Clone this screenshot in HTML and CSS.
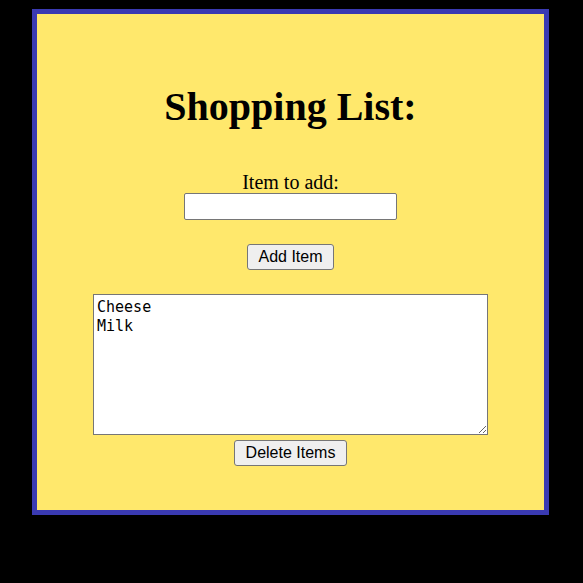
FILE: index.html
```html
<!DOCTYPE html>
<html>
<head>
<meta charset="utf-8">
<title>Shopping List</title>
<link rel="stylesheet" href="styles.css">
</head>
<body>
<div class="box">
  <h1 class="title">Shopping List:</h1>
  <label class="label" for="item">Item to add:</label>
  <input class="field" id="item" type="text">
  <button class="btn btn-add">Add Item</button>
  <textarea class="list">Cheese
Milk</textarea>
  <button class="btn btn-delete">Delete Items</button>
</div>
</body>
</html>
```
FILE: styles.css
```css
html, body {
  margin: 0;
  padding: 0;
  background: #000;
}
.box {
  box-sizing: border-box;
  margin: 9px 0 0 32px;
  width: 517px;
  height: 506px;
  border: 5px solid #3a3ab2;
  background: #ffe86c;
  display: flex;
  flex-direction: column;
  align-items: center;
  padding-top: 70px;
  font-family: "Liberation Serif", "Times New Roman", serif;
  color: #000;
}
.title {
  margin: 0;
  font-size: 40px;
  font-weight: 700;
  line-height: 46px;
}
.label {
  margin-top: 41px;
  font-size: 20px;
  line-height: 22px;
}
.field {
  box-sizing: border-box;
  margin: 0;
  width: 213px;
  height: 27px;
  border: 1px solid #767676;
  border-radius: 2px;
  background: #fff;
  font-size: 16px;
  padding: 1px 2px;
}
.btn {
  box-sizing: border-box;
  margin: 0;
  height: 26px;
  border: 1px solid #767676;
  border-radius: 3px;
  background: #efefef;
  font-family: "Liberation Sans", Arial, sans-serif;
  font-size: 16px;
  color: #000;
  padding: 0 9px;
}
.btn-add {
  margin-top: 24px;
  width: 87px;
}
.list {
  box-sizing: border-box;
  margin: 24px 0 0;
  width: 395px;
  height: 141px;
  border: 1px solid #767676;
  background: #fff;
  padding: 3px 3px;
  font-family: "DejaVu Sans Mono", monospace;
  font-size: 15px;
  line-height: 19px;
  color: #000;
}
.btn-delete {
  margin-top: 5px;
  width: 113px;
}
```
